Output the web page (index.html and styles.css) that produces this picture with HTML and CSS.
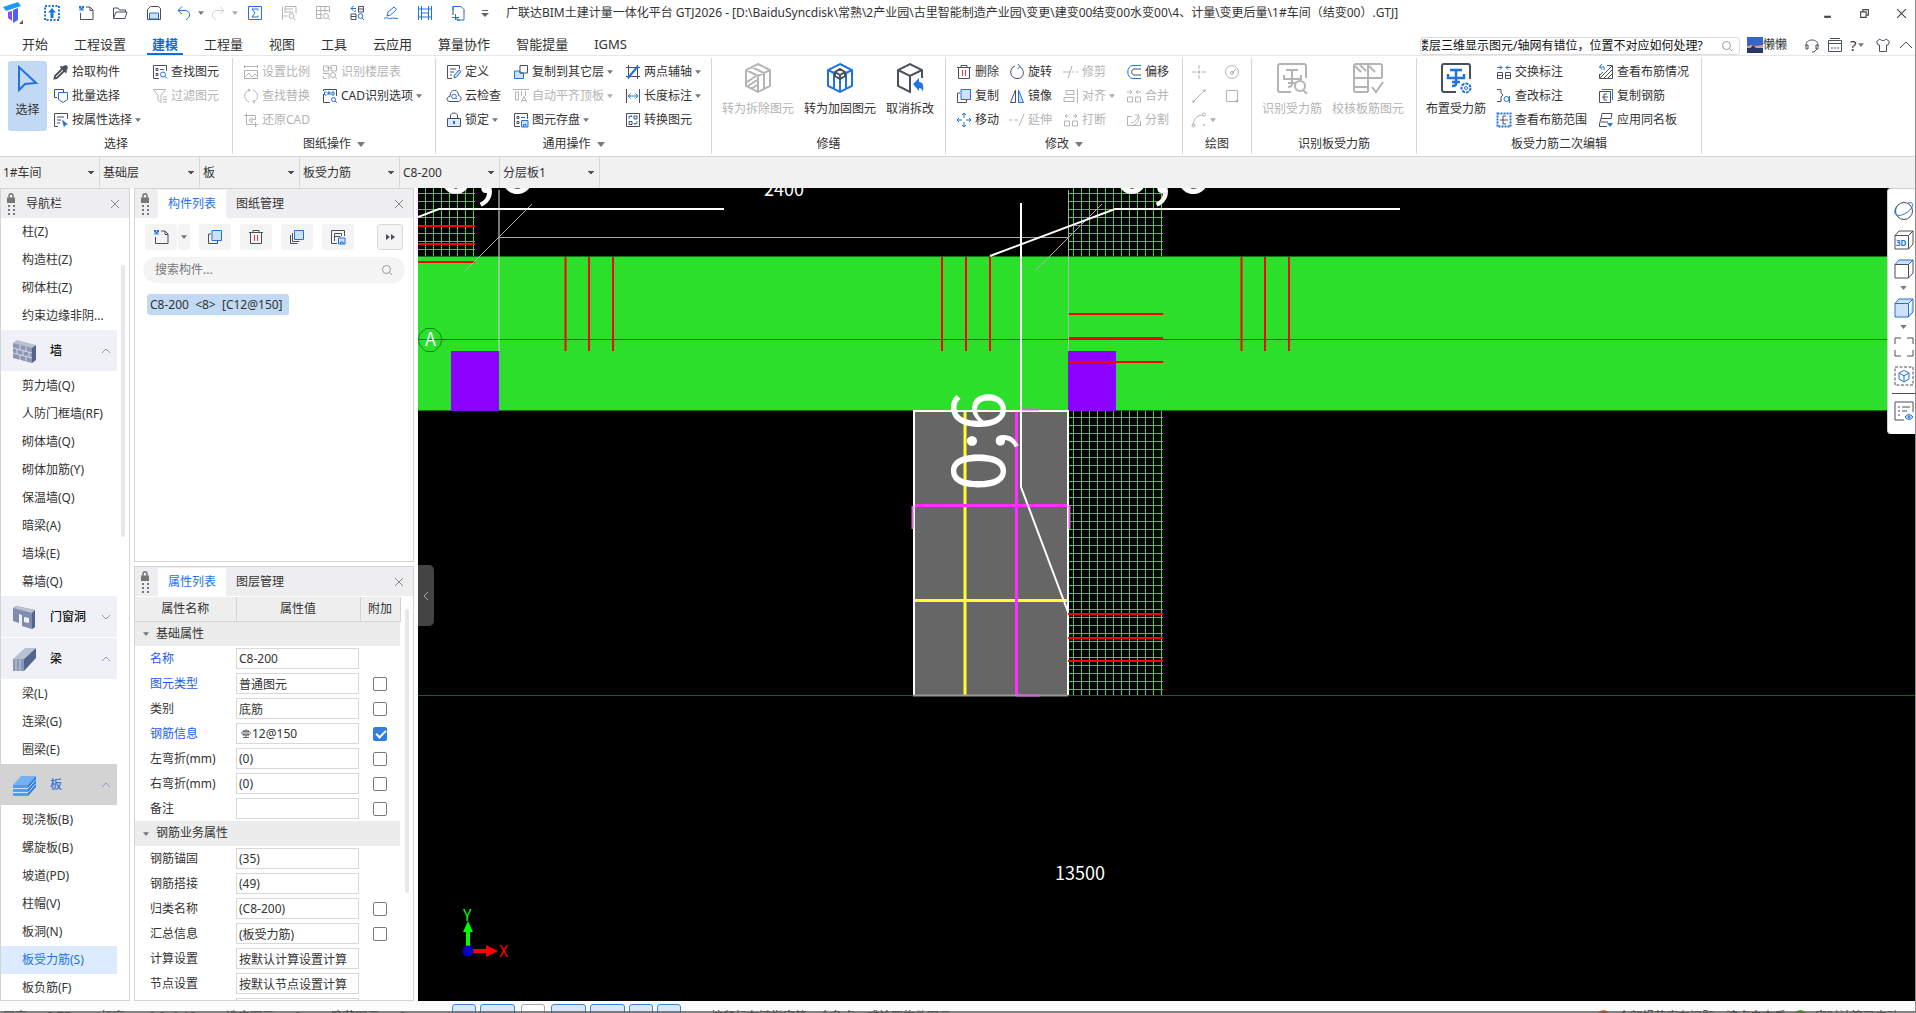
FILE: index.html
```html
<!DOCTYPE html>
<html lang="zh-CN">
<head>
<meta charset="utf-8">
<title>广联达BIM土建计量一体化平台 GTJ2026</title>
<link rel="stylesheet" href="styles.css">
</head>
<body>
<svg class="defs" aria-hidden="true">
  <symbol id="newfile" viewBox="0 0 16 16"><path d="M8 2h4l3 3v9.500h-12.500V8M12 2v3.500h3" class="d"/><path d="M1 1h5v5H1z" fill="#9cc3f5"/><path d="M1 1h2v2H1zM4 1h2v2H4zM2.500 3h2v2h-2z" fill="#1f73e0"/></symbol>
  <symbol id="open" viewBox="0 0 16 16"><path d="M1.500 13V3h4.500l1.500 2h6v2M1.500 13.500l2.500-6.500h11l-2 6.500z" class="d"/></symbol>
  <symbol id="save" viewBox="0 0 16 16"><path d="M1.500 4.500l3-3h8l2 2v11h-13z" class="d"/><path d="M3.500 14V8h9v6z" class="bf"/></symbol>
  <symbol id="undo" viewBox="0 0 16 16"><path d="M6 1.500L2 5.500l4 3.500M2 5.500h7c6 .500 6 7 1 9" class="b"/></symbol>
  <symbol id="redo" viewBox="0 0 16 16"><path d="M10 1.500l4 4-4 3.500M14 5.500H7c-6 .500-6 7-1 9" class="g"/></symbol>
  <symbol id="upload" viewBox="0 0 16 16"><path d="M1 1h14v14H1z" class="b" stroke-dasharray="2 1.500" style="stroke-width:2"/><path d="M8 3l4 4.500H9.500V13h-3V7.500H4z" fill="#1f73e0"/></symbol>
  <symbol id="sum" viewBox="0 0 16 16"><path d="M1.500 1.500h13v13h-13zM11 5.500V4H5l3 4-3 4h6v-1.500" class="b"/></symbol>
  <symbol id="calc" viewBox="0 0 16 16"><path d="M1.500 14.500v-13M4 1.500h11v7M1.500 11h5M4 4h8M4 7h8M4 2v6" class="g"/><circle cx="10.500" cy="11" r="2.500" class="g"/><path d="M12.500 13l2 2" class="g"/></symbol>
  <symbol id="gridq" viewBox="0 0 16 16"><path d="M1.500 1.500h13v6M1.500 1.500v12h6M1.500 5.500h13M1.500 9.500h6M5.800 1.500v12M10 1.500v6" class="g"/><circle cx="11" cy="11" r="2.500" class="g"/><path d="M13 13l2 2" class="g"/></symbol>
  <symbol id="swapq" viewBox="0 0 16 16"><path d="M9.500 7V1.500h5V7zM9.500 4h5M2 9v5.500h5V9zM2 11.500h5" class="d"/><path d="M4.500 1L2 3.500 4.500 6M2 3.500h5M5 7l2-1.500" class="b"/><circle cx="11.500" cy="11" r="2.300" class="b"/><path d="M13 13l2 2" class="b"/></symbol>
  <symbol id="pen" viewBox="0 0 16 16"><path d="M4 11l1-4 6-5 2.500 2.500-6 5.500zM1 13.500c3-2 5 1 7 0s4 0 7 0" class="b"/></symbol>
  <symbol id="ladder" viewBox="0 0 16 16"><path d="M1.500 1v14M14.500 1v14M4.500 1v14M11.500 1v14" class="b"/><path d="M1 4h14M1 12h14M4.500 8h7" class="b"/></symbol>
  <symbol id="addpage" viewBox="0 0 16 16"><path d="M2 10V1.500h8l3 3V8M9 15H6" class="d"/><path d="M2 5V1.500h8M13 8v7H6v-2M1 12.500h7M4.500 9v6" class="b"/></symbol>
  <symbol id="dropper" viewBox="0 0 16 16"><path d="M10 2l3-1 2 2-1 3-1.500 1.500-4-4z" fill="#4a4f5c"/><path d="M7.500 2.500l6 6M9 5l-7 7-.5 2.500L4 14l7-7" class="d" style="stroke-width:1.800"/></symbol>
  <symbol id="batch" viewBox="0 0 16 16"><path d="M4 9.500H1.500v-8h9V4" class="d"/><path d="M5.500 4.500h9v7l-4.500 3-4.500-3z" class="b"/></symbol>
  <symbol id="proplist" viewBox="0 0 16 16"><path d="M5 14.500H1.500v-13h13V7M4 5h7M4 8h4M4 11h3" class="d"/><path d="M9 7.500l6 5-2.500.500-1.500 2.500z" fill="#1f73e0"/></symbol>
  <symbol id="findel" viewBox="0 0 16 16"><path d="M7 14.500H1.500v-13h13V7M4 4.500h2v2H4zM4 9.500h2v2H4zM8 5.500h4" class="d"/><circle cx="11" cy="10.500" r="2.500" class="b"/><path d="M13 12.500l2 2" class="b"/></symbol>
  <symbol id="filter" viewBox="0 0 16 16"><path d="M1.500 1.500h12l-4.500 6v7l-3-2v-5zM11 9h4M11 11.500h4M11 14h4" class="g"/></symbol>
  <symbol id="scale" viewBox="0 0 16 16"><path d="M1.500 1v3M14.500 1v3M1 2.500h14M1.500 6.500h13v8h-13zM2 13l4-4 3 4 3-3 2 2" class="g"/></symbol>
  <symbol id="floor" viewBox="0 0 16 16"><path d="M1.500 2h5v5h-5zM9 1.500h5.500V7H9zM1 9.500h6V15M1.500 12v2.500H4M4.500 4h6" class="g"/><circle cx="11" cy="11" r="2.500" class="g"/><path d="M13 13l2 2" class="g"/></symbol>
  <symbol id="replace" viewBox="0 0 16 16"><path d="M6 14C1 12 0 5 5 2.500L7 2M5 1l2 1-1 2M10 2c5 2 6 8 2 11l-2 1M11 12l-1 2 2 1" class="g"/></symbol>
  <symbol id="cadq" viewBox="0 0 16 16"><path d="M1.500 6v8.500H8M1.500 3V1.500h13V8" class="d"/><path d="M4.500 4H2.500v3h2M6 7V4h2v3M6 5.500h2M10 4v3h2V4z" class="b"/><circle cx="11.500" cy="11.500" r="2" class="b"/><path d="M13 13l2 2" class="b"/></symbol>
  <symbol id="crop" viewBox="0 0 16 16"><path d="M3.500 1v11.500H15M1 3.500h11.500V8M12.500 10v5M6 8l3-2v5zM9 8l3-1" class="g"/></symbol>
  <symbol id="define" viewBox="0 0 16 16"><path d="M6 14.500H1.500v-13h12V5M4 5h6M4 8h4M4 11h2" class="d"/><path d="M8 14l.5-3L13 6l2 1.500-4.500 5.500z" class="bf"/></symbol>
  <symbol id="cloud" viewBox="0 0 16 16"><path d="M4 13.500c-4 0-4-5 0-5 0-8 8.500-8 8.500-1 4 1 3 6 0 6z" class="d"/><circle cx="8" cy="8.500" r="2.300" class="b"/><path d="M9.800 10l1.500 1.500" class="b"/></symbol>
  <symbol id="lock" viewBox="0 0 16 16"><path d="M4.500 6V4c0-4 7-4 7 0v2" class="d"/><path d="M1.500 6.500h13v8h-13z" class="df"/><path d="M8 9v3" class="b" style="stroke-width:2"/></symbol>
  <symbol id="copyto" viewBox="0 0 16 16"><path d="M7 7H1.500v7.500h9V9H7z" class="bf"/><path d="M7 1.500h7.500V9H7z" class="d"/></symbol>
  <symbol id="aligntop" viewBox="0 0 16 16"><path d="M0 1.500h16M2.500 4h3v8h-3zM8.500 3v5M12.500 3v5M8 14.500l3-6 3 6M9 12.500h4" class="g"/></symbol>
  <symbol id="disk" viewBox="0 0 16 16"><path d="M7 14.500H1.500v-13h13V7M4 4.500h2v2H4zM4 9.500h2v2H4zM8 5.500h4" class="d"/><path d="M8.500 8.500H15V15H8.500zM10.500 15v-2.500H13V15" class="bf"/></symbol>
  <symbol id="axis" viewBox="0 0 16 16"><path d="M3.500 1v14M12.500 1v14M1 3.500h14M1 12.500h14" class="d"/><path d="M3 14L13 2" class="b" style="stroke-width:2"/></symbol>
  <symbol id="length" viewBox="0 0 16 16"><path d="M1.500 1v14M14.500 1v14" class="d"/><path d="M3 8h10M5.500 5.500L3 8l2.500 2.500M10.500 5.500L13 8l-2.500 2.500" class="b"/></symbol>
  <symbol id="convert" viewBox="0 0 16 16"><path d="M1.500 1.500h13v13h-13zM9 4h3v3H9zM4 9.500h3v3H4z" class="d"/><path d="M4 7V4.500h3M5.500 3L7 4.500M12 9v2.500H9M10.500 13L9 11.500" class="b"/></symbol>
  <symbol id="trash" viewBox="0 0 16 16"><path d="M1 3.500h14M5 3.500v-2h6v2M2.500 3.500v11h11v-11" class="d"/><path d="M6.500 6v6M9.500 6v6" stroke="#e03a3a" fill="none"/></symbol>
  <symbol id="copy" viewBox="0 0 16 16"><path d="M4 5H1.500v9.500h9V12" class="d"/><path d="M5 1.500h9.500v10H5z" class="bf"/></symbol>
  <symbol id="move" viewBox="0 0 16 16"><path d="M8 1v5M8 10v5M1 8h5M10 8h5M6 3l2-2 2 2M6 13l2 2 2-2M3 6L1 8l2 2M13 6l2 2-2 2" class="b"/></symbol>
  <symbol id="rotate" viewBox="0 0 16 16"><path d="M6 2c-6 2-6 12 2 12.500S16 5 10.500 2.500" class="d"/><path d="M9 0l2 2.500L8.500 5" class="b"/></symbol>
  <symbol id="mirror" viewBox="0 0 16 16"><path d="M6.500 2v12.500h-5z" class="d"/><path d="M9.500 2v12.500h5z" class="bf"/></symbol>
  <symbol id="extend" viewBox="0 0 16 16"><path d="M0 8h3M5 8h4M10 14l5-12" class="g"/></symbol>
  <symbol id="trim" viewBox="0 0 16 16"><path d="M0 8h7M9 8h2M13 8h2M5 14l4-12" class="g"/></symbol>
  <symbol id="align" viewBox="0 0 16 16"><path d="M14.500 1v14M3 2.500h8v4H3zM1 9.500h10v4H1z" class="g"/></symbol>
  <symbol id="break" viewBox="0 0 16 16"><path d="M1.500 9h5v5h-5zM9.500 9h5v5h-5zM2 4h4M4 2L2 4l2 2M14 4h-4M12 2l2 2-2 2" class="g"/></symbol>
  <symbol id="offset" viewBox="0 0 16 16"><path d="M15 5H8c-3 0-3 6 0 6h7" class="d"/><path d="M15 1.500H7c-7 0-7 13 0 13h8" class="b"/></symbol>
  <symbol id="merge" viewBox="0 0 16 16"><path d="M1.500 9h5v5h-5zM9.500 9h5v5h-5zM1 4h5M4 2l2 2-2 2M15 4h-5M12 2l-2 2 2 2" class="g"/></symbol>
  <symbol id="split" viewBox="0 0 16 16"><path d="M6 4.500H1.500v9h13V9M5 11c4 0 5-3 8-8h-4M8 13c4-2 5-4 5-9" class="g"/></symbol>
  <symbol id="point" viewBox="0 0 16 16"><path d="M8 1v4M8 11v4M1 8h4M11 8h4" class="g"/><circle cx="8" cy="8" r="1.500" fill="#b4b4b4"/></symbol>
  <symbol id="circle" viewBox="0 0 16 16"><circle cx="8" cy="8" r="6.500" class="g"/><path d="M8 9l4-4" class="g"/><circle cx="8" cy="9" r="1.500" class="g"/></symbol>
  <symbol id="line" viewBox="0 0 16 16"><path d="M3 13L13 3" class="g"/><circle cx="2.500" cy="13.500" r="1.200" fill="#b4b4b4"/><circle cx="13.500" cy="2.500" r="1.200" fill="#b4b4b4"/></symbol>
  <symbol id="rect" viewBox="0 0 16 16"><path d="M2.500 2.500h11v11h-11z" class="g"/><circle cx="13" cy="13" r="1.500" fill="#b4b4b4"/></symbol>
  <symbol id="arc" viewBox="0 0 16 16"><path d="M2 14C2 7 6 3 12 3" class="g"/><circle cx="2.500" cy="13.500" r="1.500" class="g"/><circle cx="13" cy="2.500" r="1.500" class="g"/><circle cx="13" cy="13" r="1" fill="#b4b4b4"/></symbol>
  <symbol id="swapmark" viewBox="0 0 16 16"><path d="M1 3.500h5M4 1.500l2 2-2 2M15 3.500h-5M12 1.500l-2 2 2 2" class="b"/><path d="M1.500 8.500h5v6h-5zM9.500 8.500h5v6h-5zM1.500 11.500h5M9.500 11.500h5" class="d"/></symbol>
  <symbol id="markq" viewBox="0 0 16 16"><path d="M1 1.500h4V5l2 2-2 2v4.500H1" class="d"/><circle cx="10.500" cy="11" r="2.500" class="b"/><path d="M13.500 8v7" class="b"/></symbol>
  <symbol id="range" viewBox="0 0 16 16"><path d="M1.500 1.500h13v13h-13z" class="b" stroke-dasharray="2 1" style="stroke-width:2"/><path d="M10 4H7v8h3M4 8h8" class="d"/></symbol>
  <symbol id="hatchq" viewBox="0 0 16 16"><path d="M9 1.500h5.500v13h-13V10M2 14L14 2M6 14l8-8M10 14l4-4M2 11l3-3" class="d"/><path d="M4 0L1.500 3 4 5.500M1.500 3H6v3" class="b"/></symbol>
  <symbol id="copybar" viewBox="0 0 16 16"><path d="M1.500 3.500h11v11h-11zM9 6H6v6h3M4 9h6" class="d"/><path d="M4 1.500h10.500V12" class="b"/></symbol>
  <symbol id="applyname" viewBox="0 0 16 16"><path d="M4 1.500h10l-1 5H3zM3 6.500L1.500 12v2.500H9M3 10h7" class="d"/><path d="M9 11h6l-3 4z" fill="#1f73e0"/></symbol>
  <symbol id="mag" viewBox="0 0 16 16"><circle cx="7.500" cy="7.500" r="4" fill="none" stroke="#999"/><path d="M10.500 10.500L13 13" stroke="#999"/></symbol>
  <symbol id="headset" viewBox="0 0 16 16"><path d="M2 9C1 1 15 1 14 9M2 8v4h2V8zM14 8v4h-2V8zM13 12l-3 3H8" class="d"/></symbol>
  <symbol id="cal" viewBox="0 0 16 16"><path d="M1.500 3.500h13v11h-13zM3 1.500h10M1.500 6.500h13M4 11h2M7 11h2M10 11h2" class="d"/></symbol>
  <symbol id="shirt" viewBox="0 0 16 16"><path d="M5 2L1.500 4.500 3 8h1.500v6.500h7V8H13l1.500-3.500L11 2c-1 2-5 2-6 0z" class="d"/></symbol>
  <symbol id="arrow" viewBox="0 0 8 5"><path d="M0 0h8L4 5z" fill="#77797e"/></symbol>
  <symbol id="up" viewBox="0 0 10 6"><path d="M1 5l4-4 4 4" fill="none" stroke="#8c9ab5"/></symbol>
  <symbol id="down" viewBox="0 0 10 6"><path d="M1 1l4 4 4-4" fill="none" stroke="#8c9ab5"/></symbol>
  <symbol id="x" viewBox="0 0 10 10"><path d="M1 1l8 8M9 1L1 9" fill="none" stroke="#888"/></symbol>
  <symbol id="grip" viewBox="0 0 10 22"><path d="M3 5V3c0-3 4-3 4 0v2" fill="none" stroke="#777" stroke-width="1.500"/><path d="M1 4.500h8V10H1z" fill="#777"/><path d="M3 12v10M8 12v10" stroke="#777" stroke-width="2" stroke-dasharray="2 2"/></symbol>
  <symbol id="cube" viewBox="0 0 20 20"><path d="M1 5.500h13.500V19H1zM1 5.500L5 1h14l-4.500 4.500M19 1v13l-4.500 5"/></symbol>
</svg>

<div class="app">
  <header class="titlebar">
    <svg class="logo" viewBox="0 0 22 22"><path d="M1 5L16 0l3 4L4 9z" fill="#1b9bff"/><path d="M6 10l4-1v10l-4-3z" fill="#8a4cf0"/><path d="M11 8l5-2v12l-5 3z" fill="#4766f6"/><path d="M21 18v4h-4z" fill="#555"/></svg>
    <nav class="quick" aria-label="快速访问">
      <button aria-label="上传"><svg><use href="#upload"/></svg></button>
      <button aria-label="新建"><svg><use href="#newfile"/></svg></button>
      <button aria-label="打开"><svg><use href="#open"/></svg></button>
      <button aria-label="保存"><svg><use href="#save"/></svg></button>
      <button aria-label="撤销" class="drop"><svg><use href="#undo"/></svg><svg class="arrow"><use href="#arrow"/></svg></button>
      <button aria-label="恢复" class="drop dim"><svg><use href="#redo"/></svg><svg class="arrow"><use href="#arrow"/></svg></button>
      <button aria-label="汇总计算"><svg><use href="#sum"/></svg></button>
      <button aria-label="查看计算式"><svg><use href="#calc"/></svg></button>
      <button aria-label="查看工程量"><svg><use href="#gridq"/></svg></button>
      <button aria-label="查找替换"><svg><use href="#swapq"/></svg></button>
      <button aria-label="编辑"><svg><use href="#pen"/></svg></button>
      <button aria-label="钢筋三维"><svg><use href="#ladder"/></svg></button>
      <button aria-label="添加"><svg><use href="#addpage"/></svg></button>
      <button aria-label="自定义" class="more"><svg viewBox="0 0 8 9"><path d="M1 1.500h6" stroke="#666"/><path d="M0 4h8L4 8z" fill="#666"/></svg></button>
    </nav>
    <h1>广联达BIM土建计量一体化平台 GTJ2026 - [D:\BaiduSyncdisk\常熟\2产业园\古里智能制造产业园\变更\建变00结变00水变00\4、计量\变更后量\1#车间（结变00）.GTJ]</h1>
    <div class="winbtns">
      <button aria-label="最小化"><svg viewBox="0 0 10 10"><path d="M2 8h6" stroke="#444" stroke-width="2"/></svg></button>
      <button aria-label="还原"><svg viewBox="0 0 10 10"><path d="M1.500 3.500h5v5h-5zM3.500 3V1.500h5v5H7" fill="none" stroke="#444"/></svg></button>
      <button aria-label="关闭"><svg viewBox="0 0 10 10"><path d="M1 1l8 8M9 1L1 9" stroke="#444"/></svg></button>
    </div>
  </header>

  <div class="tabbar">
    <nav class="tabs">
      <a href="#">开始</a><a href="#">工程设置</a><a href="#" class="on">建模</a><a href="#">工程量</a><a href="#">视图</a><a href="#">工具</a><a href="#">云应用</a><a href="#">算量协作</a><a href="#">智能提量</a><a href="#">IGMS</a>
    </nav>
    <label class="help"><input type="text" aria-label="帮助搜索" value="楼层三维显示图元/轴网有错位，位置不对应如何处理?"><svg><use href="#mag"/></svg></label>
    <div class="user"><svg viewBox="0 0 16 16"><path d="M0 0h16v16H0z" fill="#3267c8"/><path d="M0 9l5-1 3 1 8-1v3H0z" fill="#e09a92"/><path d="M0 11h16v5H0z" fill="#26376e"/><path d="M3 12l3-4 4 4z" fill="#3a3050"/></svg><span>懒懒</span></div>
    <div class="utils">
      <button aria-label="客服"><svg><use href="#headset"/></svg></button>
      <button aria-label="日历"><svg><use href="#cal"/></svg></button>
      <button aria-label="帮助" class="q">?<svg class="arrow"><use href="#arrow"/></svg></button>
      <button aria-label="皮肤"><svg><use href="#shirt"/></svg></button>
      <button aria-label="收起"><svg viewBox="0 0 16 16"><path d="M2 11l6-6 6 6" class="d"/></svg></button>
    </div>
  </div>

  <div class="ribbon">
    <section class="group g1">
      <div class="body">
        <button class="big picked"><svg viewBox="0 0 28 32"><path d="M5 4v23l6-6 11-1z" fill="none" stroke="#1f73e0" stroke-width="2"/></svg>选择</button>
        <div class="tools">
          <button><svg><use href="#dropper"/></svg>拾取构件</button>
          <button><svg><use href="#batch"/></svg>批量选择</button>
          <button><svg><use href="#proplist"/></svg>按属性选择<svg class="arrow"><use href="#arrow"/></svg></button>
          <button><svg><use href="#findel"/></svg>查找图元</button>
          <button disabled><svg><use href="#filter"/></svg>过滤图元</button>
        </div>
      </div>
      <h2>选择</h2>
    </section>
    <section class="group g2">
      <div class="body"><div class="tools">
        <button disabled><svg><use href="#scale"/></svg>设置比例</button>
        <button disabled><svg><use href="#replace"/></svg>查找替换</button>
        <button disabled><svg><use href="#crop"/></svg>还原CAD</button>
        <button disabled><svg><use href="#floor"/></svg>识别楼层表</button>
        <button><svg><use href="#cadq"/></svg>CAD识别选项<svg class="arrow"><use href="#arrow"/></svg></button>
      </div></div>
      <h2>图纸操作<svg class="arrow"><use href="#arrow"/></svg></h2>
    </section>
    <section class="group g3">
      <div class="body"><div class="tools">
        <button><svg><use href="#define"/></svg>定义</button>
        <button><svg><use href="#cloud"/></svg>云检查</button>
        <button><svg><use href="#lock"/></svg>锁定<svg class="arrow"><use href="#arrow"/></svg></button>
        <button><svg><use href="#copyto"/></svg>复制到其它层<svg class="arrow"><use href="#arrow"/></svg></button>
        <button disabled><svg><use href="#aligntop"/></svg>自动平齐顶板<svg class="arrow"><use href="#arrow"/></svg></button>
        <button><svg><use href="#disk"/></svg>图元存盘<svg class="arrow"><use href="#arrow"/></svg></button>
        <button><svg><use href="#axis"/></svg>两点辅轴<svg class="arrow"><use href="#arrow"/></svg></button>
        <button><svg><use href="#length"/></svg>长度标注<svg class="arrow"><use href="#arrow"/></svg></button>
        <button><svg><use href="#convert"/></svg>转换图元</button>
      </div></div>
      <h2>通用操作<svg class="arrow"><use href="#arrow"/></svg></h2>
    </section>
    <section class="group g4">
      <div class="body">
        <button class="big" disabled><svg viewBox="0 0 28 32"><path d="M14 2l12 6v16l-12 6-12-6V8zM2 8l12 6 12-6M14 14v16M8 5l12 6M3 20l9-6M4 24l9-6M7 27l6-4M20 11v16" fill="none" stroke="#b4b4b4" stroke-width="2"/></svg>转为拆除图元</button>
        <button class="big"><svg viewBox="0 0 28 32"><path d="M14 2l12 6v16l-12 6-12-6V8zM2 8l6 3M26 8l-6 3M8 11v15M20 11v15M14 16v14" fill="none" stroke="#1f73e0" stroke-width="2"/><path d="M14 7l5 3v4l-5 3-5-3v-4zM9 10l5 3 5-3M14 13v4" fill="none" stroke="#4a4f5c" stroke-width="2"/></svg>转为加固图元</button>
        <button class="big"><svg viewBox="0 0 28 32"><path d="M26 16V8L14 2 2 8v16l12 6V14M2 8l12 6 12-6" fill="none" stroke="#4a4f5c" stroke-width="2"/><path d="M17 22l6-6v4c4 0 5 4 4 10-1-3-2-4-4-4v3z" fill="#1f73e0"/></svg>取消拆改</button>
      </div>
      <h2>修缮</h2>
    </section>
    <section class="group g5">
      <div class="body"><div class="tools">
        <button><svg><use href="#trash"/></svg>删除</button>
        <button><svg><use href="#copy"/></svg>复制</button>
        <button><svg><use href="#move"/></svg>移动</button>
        <button><svg><use href="#rotate"/></svg>旋转</button>
        <button><svg><use href="#mirror"/></svg>镜像</button>
        <button disabled><svg><use href="#extend"/></svg>延伸</button>
        <button disabled><svg><use href="#trim"/></svg>修剪</button>
        <button disabled><svg><use href="#align"/></svg>对齐<svg class="arrow"><use href="#arrow"/></svg></button>
        <button disabled><svg><use href="#break"/></svg>打断</button>
        <button><svg><use href="#offset"/></svg>偏移</button>
        <button disabled><svg><use href="#merge"/></svg>合并</button>
        <button disabled><svg><use href="#split"/></svg>分割</button>
      </div></div>
      <h2>修改<svg class="arrow"><use href="#arrow"/></svg></h2>
    </section>
    <section class="group g6">
      <div class="body"><div class="tools">
        <button disabled aria-label="点"><svg><use href="#point"/></svg></button>
        <button disabled aria-label="直线"><svg><use href="#line"/></svg></button>
        <button disabled aria-label="弧"><svg><use href="#arc"/></svg><svg class="arrow"><use href="#arrow"/></svg></button>
        <button disabled aria-label="圆"><svg><use href="#circle"/></svg></button>
        <button disabled aria-label="矩形"><svg><use href="#rect"/></svg></button>
      </div></div>
      <h2>绘图</h2>
    </section>
    <section class="group g7">
      <div class="body">
        <button class="big" disabled><svg viewBox="0 0 32 32"><path d="M15 30H4q-2 0-2-2V4q0-2 2-2h24q2 0 2 2v12M10 8h12M8 13v4h17v-4M16 8v14q0 3-4 3M12 21h8" fill="none" stroke="#b4b4b4" stroke-width="2"/><circle cx="24" cy="24" r="5" fill="#fff" stroke="#b4b4b4" stroke-width="2"/><path d="M27 28l4 4" stroke="#b4b4b4" stroke-width="2"/></svg>识别受力筋</button>
        <button class="big" disabled><svg viewBox="0 0 32 32"><path d="M16 30H4q-2 0-2-2V4q0-2 2-2h24q2 0 2 2v12M16 2v28M2 16h28M3 4l6 6M8 3l6 6M17 4l6 6M2 25h14" fill="none" stroke="#b4b4b4" stroke-width="2"/><path d="M20 25l4 5 7-10" fill="none" stroke="#b4b4b4" stroke-width="2"/></svg>校核板筋图元</button>
      </div>
      <h2>识别板受力筋</h2>
    </section>
    <section class="group g8">
      <div class="body">
        <button class="big"><svg viewBox="0 0 32 32"><path d="M16 30H4q-2 0-2-2V4q0-2 2-2h24q2 0 2 2v13" fill="none" stroke="#4a4f5c" stroke-width="2"/><path d="M10 8h12M8 12v4h16v-4M16 8v14q0 2-4 2M12 20h8" fill="none" stroke="#1f73e0" stroke-width="2.500"/><circle cx="26" cy="26" r="4.500" fill="#fff" stroke="#1f73e0" stroke-width="2" stroke-dasharray="3 1"/><circle cx="26" cy="26" r="1.500" fill="none" stroke="#1f73e0"/></svg>布置受力筋</button>
        <div class="tools">
          <button><svg><use href="#swapmark"/></svg>交换标注</button>
          <button><svg><use href="#markq"/></svg>查改标注</button>
          <button><svg><use href="#range"/></svg>查看布筋范围</button>
          <button><svg><use href="#hatchq"/></svg>查看布筋情况</button>
          <button><svg><use href="#copybar"/></svg>复制钢筋</button>
          <button><svg><use href="#applyname"/></svg>应用同名板</button>
        </div>
      </div>
      <h2>板受力筋二次编辑</h2>
    </section>
  </div>

  <div class="combos">
    <select aria-label="单体"><option>1#车间</option></select>
    <select aria-label="楼层"><option>基础层</option></select>
    <select aria-label="构件大类"><option>板</option></select>
    <select aria-label="构件类型"><option>板受力筋</option></select>
    <select aria-label="构件"><option>C8-200</option></select>
    <select aria-label="分层"><option>分层板1</option></select>
  </div>

  <main class="work">
    <aside class="panel navpanel">
      <div class="phead"><svg class="grip"><use href="#grip"/></svg><span>导航栏</span><button class="close" aria-label="关闭导航栏"><svg><use href="#x"/></svg></button></div>
      <div class="navbody">
        <nav class="navlist">
          <a href="#">柱(Z)</a><a href="#">构造柱(Z)</a><a href="#">砌体柱(Z)</a><a href="#">约束边缘非阴...</a>
          <button><svg class="cat" viewBox="0 0 24 24"><path d="M1 4l4-3 19 5-4 4z" fill="#b9c0d2"/><path d="M1 4l19 5v15L1 19z" fill="#8b97b5"/><path d="M20 9l4-3v15l-4 3z" fill="#55648c"/><path d="M1 9l19 5M1 14l19 5M8 6v5M14 8v5M5 10v5M11 12v5M17 13v5M8 16v5M14 17v5" stroke="#d4d9e6" fill="none"/></svg><b>墙</b><svg class="chev"><use href="#up"/></svg></button>
          <a href="#">剪力墙(Q)</a><a href="#">人防门框墙(RF)</a><a href="#">砌体墙(Q)</a><a href="#">砌体加筋(Y)</a><a href="#">保温墙(Q)</a><a href="#">暗梁(A)</a><a href="#">墙垛(E)</a><a href="#">幕墙(Q)</a>
          <button><svg class="cat" viewBox="0 0 24 24"><path d="M1 3l3-2 19 4v17l-3 2-10-3V10l-3-1v9l-6-2z" fill="#7f8cad"/><path d="M1 3l3-2 19 4-3 3z" fill="#b9c0d2"/><path d="M20 8l3-3v17l-3 2z" fill="#55648c"/><path d="M12 12l5 1v5l-5-1z" fill="#f2f3f8"/></svg><b>门窗洞</b><svg class="chev"><use href="#down"/></svg></button>
          <button><svg class="cat" viewBox="0 0 24 24"><path d="M1 12L13 1h11L12 12z" fill="#b9c0d2"/><path d="M1 12h11v12H1z" fill="#8b97b5"/><path d="M12 12L24 1v10L12 24z" fill="#55648c"/><path d="M4 12v12M8 12v12" stroke="#c8cede"/></svg><b>梁</b><svg class="chev"><use href="#up"/></svg></button>
          <a href="#">梁(L)</a><a href="#">连梁(G)</a><a href="#">圈梁(E)</a>
          <button class="on"><svg class="cat" viewBox="0 0 24 24"><path d="M1 12L9 3h15l-8 9z" fill="#74b2f4"/><path d="M1 12h15v11H1z" fill="#4f9df2"/><path d="M16 12l8-9v11l-8 9z" fill="#2b7be8"/><path d="M1 15.500h15l8-9M1 19.500h15l8-9" stroke="#cfe4fb" fill="none"/></svg><b>板</b><svg class="chev"><use href="#up"/></svg></button>
          <a href="#">现浇板(B)</a><a href="#">螺旋板(B)</a><a href="#">坡道(PD)</a><a href="#">柱帽(V)</a><a href="#">板洞(N)</a><a href="#" class="on">板受力筋(S)</a><a href="#">板负筋(F)</a>
        </nav>
        <div class="thumb"></div>
      </div>
    </aside>

    <div class="side">
      <section class="panel complist">
        <div class="phead"><svg class="grip"><use href="#grip"/></svg><button class="ptab on">构件列表</button><button class="ptab">图纸管理</button><button class="close" aria-label="关闭构件列表"><svg><use href="#x"/></svg></button></div>
        <div class="ctools">
          <button class="new" aria-label="新建构件"><svg><use href="#newfile"/></svg></button><button class="newdrop" aria-label="新建选项"><svg class="arrow"><use href="#arrow"/></svg></button>
          <button aria-label="复制构件"><svg><use href="#copy"/></svg></button>
          <button aria-label="删除构件"><svg><use href="#trash"/></svg></button>
          <button aria-label="层间复制"><svg viewBox="0 0 16 16"><path d="M1.500 6v8.500h7M3.500 4v8.500h7" class="d"/><path d="M5.500 1.500h9v9h-9z" class="bf"/></svg></button>
          <button aria-label="存盘"><svg viewBox="0 0 16 16"><path d="M7 14.500H1.500v-13h13V7M4.500 4.500h7M4.500 12V4.500M11.500 4.500V7M4.500 7.500h6" class="d"/><path d="M8.500 9H15v6H8.500zM10.500 15v-2H13v2" class="bf"/></svg></button>
          <button class="last" aria-label="更多"><svg viewBox="0 0 16 16"><path d="M4 5l4 3-4 3zM9 5l4 3-4 3z" fill="#4a4f5c"/></svg></button>
        </div>
        <label class="search"><input type="text" aria-label="搜索构件" placeholder="搜索构件..."><svg><use href="#mag"/></svg></label>
        <button class="comp">C8-200 &nbsp;&lt;8&gt; &nbsp;[C12@150]</button>
      </section>
      <section class="panel props">
        <div class="phead"><svg class="grip"><use href="#grip"/></svg><button class="ptab on">属性列表</button><button class="ptab">图层管理</button><button class="close" aria-label="关闭属性列表"><svg><use href="#x"/></svg></button></div>
        <div class="pbody">
          <table>
            <colgroup><col class="c1"><col class="c2"><col class="c3"></colgroup>
            <thead><tr><th>属性名称</th><th>属性值</th><th>附加</th></tr></thead>
            <tbody>
              <tr class="sec"><td colspan="3"><svg class="arrow"><use href="#arrow"/></svg>基础属性</td></tr>
              <tr class="key"><td><label for="p1">名称</label></td><td><input id="p1" type="text" value="C8-200"></td><td></td></tr>
              <tr class="key"><td><label for="p2">图元类型</label></td><td><input id="p2" type="text" value="普通图元"></td><td><input type="checkbox" aria-label="附加图元类型"></td></tr>
              <tr><td><label for="p3">类别</label></td><td><input id="p3" type="text" value="底筋"></td><td><input type="checkbox" aria-label="附加类别"></td></tr>
              <tr class="key"><td><label for="p4">钢筋信息</label></td><td><span class="rebar"><svg viewBox="0 0 10 10"><path d="M5 0v9M3 1v6M7 1v6M2 8.500h6" stroke="#444" fill="none" stroke-width=".8"/><ellipse cx="5" cy="4" rx="4.500" ry="2" fill="none" stroke="#444" stroke-width=".8"/></svg><input id="p4" type="text" value="12@150"></span></td><td><input type="checkbox" checked aria-label="附加钢筋信息"></td></tr>
              <tr><td><label for="p5">左弯折(mm)</label></td><td><input id="p5" type="text" value="(0)"></td><td><input type="checkbox" aria-label="附加左弯折"></td></tr>
              <tr><td><label for="p6">右弯折(mm)</label></td><td><input id="p6" type="text" value="(0)"></td><td><input type="checkbox" aria-label="附加右弯折"></td></tr>
              <tr><td><label for="p7">备注</label></td><td><input id="p7" type="text"></td><td><input type="checkbox" aria-label="附加备注"></td></tr>
              <tr class="sec"><td colspan="3"><svg class="arrow"><use href="#arrow"/></svg>钢筋业务属性</td></tr>
              <tr><td><label for="p8">钢筋锚固</label></td><td><input id="p8" type="text" value="(35)"></td><td></td></tr>
              <tr><td><label for="p9">钢筋搭接</label></td><td><input id="p9" type="text" value="(49)"></td><td></td></tr>
              <tr><td><label for="p10">归类名称</label></td><td><input id="p10" type="text" value="(C8-200)"></td><td><input type="checkbox" aria-label="附加归类名称"></td></tr>
              <tr><td><label for="p11">汇总信息</label></td><td><input id="p11" type="text" value="(板受力筋)"></td><td><input type="checkbox" aria-label="附加汇总信息"></td></tr>
              <tr><td><label for="p12">计算设置</label></td><td><input id="p12" type="text" value="按默认计算设置计算"></td><td></td></tr>
              <tr><td><label for="p13">节点设置</label></td><td><input id="p13" type="text" value="按默认节点设置计算"></td><td></td></tr>
              <tr><td></td><td><input type="text" aria-label="搭接设置"></td><td></td></tr>
            </tbody>
          </table>
          <div class="thumb"></div>
        </div>
      </section>
    </div>

    <section class="view">
      <svg class="drawing">
        <g transform="translate(-418 -188)">
          <g stroke="#2bdf2b" stroke-dasharray="1 7">
            <path d="M425 222.500h50M1073 222.500h90" stroke-width="69"/>
            <path d="M446.500 193v64" stroke-width="57"/>
            <path d="M1115.500 193v64M1115.500 417v278" stroke-width="95"/>
            <path d="M1073 553h90" stroke-width="284"/>
          </g>
          <path d="M400 257h4000v154H400z" fill="#2bdf2b"/>
          <path d="M400 256.500h4000M400 410.500h4000" stroke="#14701a"/>
          <path d="M418 339.500h4000" stroke="#a02a10"/>
          <path d="M418 695.500h4000" stroke="#0a6a0a"/>
          <path d="M426 328.500h8l6 5 2 6-2 6-6 6h-8l-6-6-2-6 2-6z" fill="none" stroke="#0a8a14"/>
          <path d="M451 351h48v60h-48zM1068 351h48v60h-48z" fill="#8c00ff"/>
          <path d="M914 411h154v284H914z" fill="#666"/>
          <path d="M965 411v284M914 600.500h154" stroke="#ffff30" stroke-width="3"/>
          <path d="M1016.500 411v284M914 505.500h154" stroke="#ff30ff" stroke-width="3"/>
          <path d="M914 695V411h154v284" fill="none" stroke="#fff" stroke-width="2"/>
          <path d="M913 695.500h155" stroke="#9a9a9a" stroke-width="2"/>
          <path d="M912.500 506v23M1069.500 506v23M1021 409.500h18M1016 695.500h24" stroke="#d860d8" stroke-width="2"/>
          <path d="M418 226h57M418 244h57M418 262h57M1068 314h95M1068 338h95M1068 362h95M1068 614h95M1068 638h95M1068 661h95M565.500 257v94M589 257v94M613 257v94M942 257v94M966 257v94M990 257v94M1241.500 257v94M1265 257v94M1289 257v94" stroke="#f00" stroke-width="2"/>
          <path d="M499 190v161" stroke="#c8c8c8" stroke-width="2" opacity=".6"/>
          <path d="M499 237.500h569M1068.500 190v161M465 271l67-67M1035 271l67-67" stroke="#b4b4b4" opacity=".95"/>
          <path d="M418 217l21-8h285M990 256l125-47h285M1021 203v284l47 125" fill="none" stroke="#fff" stroke-width="2"/>
          <g class="cad">
            <text x="436" y="193" class="huge">0;6</text>
            <text x="1112" y="193" class="huge">0;6</text>
            <text class="huge" transform="translate(1005 491) rotate(-90)">0;6</text>
            <text x="764" y="196">2400</text>
            <text x="1055" y="880">13500</text>
            <text x="425" y="346">A</text>
            <text x="463" y="921" class="ax ay">Y</text>
            <text x="499" y="957" class="ax">X</text>
          </g>
          <path d="M466 950v-18h-3l5-11 5 11h-3v18z" fill="#0f0"/>
          <path d="M472 949h14v-4l12 6-12 6v-4h-14z" fill="#f00"/>
          <circle cx="468" cy="951" r="5.500" fill="#0000c8"/>
        </g>
      </svg>
      <button class="handle" aria-label="收起面板"><svg viewBox="0 0 8 10"><path d="M6 1L2 5l4 4" stroke="#aaa" fill="none"/></svg></button>
      <div class="viewtools">
        <button aria-label="动态观察"><svg viewBox="0 0 20 20"><circle cx="10" cy="10" r="8.500" class="d"/><path d="M3 5c-6 9 1 12 9 7s9-12 2-10M1 13" class="b"/></svg></button>
        <button aria-label="三维"><svg viewBox="0 0 20 20"><use href="#cube" class="d"/><text x="2" y="16" class="t3d">3D</text></svg></button>
        <button aria-label="俯视"><svg viewBox="0 0 20 20"><path d="M1 5.500L5 1h14l-4.500 4.500z" class="bf"/><path d="M1 5.500h13.500V19H1zM19 1v13l-4.500 5" class="d"/></svg><svg class="arrow"><use href="#arrow"/></svg></button>
        <button aria-label="实体"><svg viewBox="0 0 20 20"><use href="#cube" class="bf"/></svg><svg class="arrow"><use href="#arrow"/></svg></button>
        <button aria-label="全屏"><svg viewBox="0 0 20 20"><path d="M1 7V1h6M13 1h6v6M19 13v6h-6M7 19H1v-6" class="d"/></svg></button>
        <button aria-label="局部三维"><svg viewBox="0 0 20 20"><path d="M1 1h18v18H1z" class="d" stroke-dasharray="3 1.500"/><path d="M10 4.500l5 2.500v6l-5 3-5-3V7zM5 7l5 3 5-3M10 10v6" class="b"/></svg></button>
        <hr>
        <button aria-label="显示设置"><svg viewBox="0 0 20 20"><path d="M10 19H1V1h18v10M4 6h2M8 6h8M4 10h2M8 10h5M4 14h2" class="d"/><path d="M11 16q4-5 8 0-4 5-8 0z" class="bf"/><circle cx="15" cy="16" r="1" class="b"/></svg></button>
      </div>
    </section>
  </main>

  <footer class="status">
    <span>层高：</span><span>3.75</span><span class="s1">标高：</span><span>-0.9~0.12</span><span class="s1">选中图元：</span><span>0</span><span class="s1">隐藏图元：</span><span>0</span>
    <div class="sbtns">
      <button aria-label="正交"></button><button class="wide" aria-label="捕捉"></button><button class="plain" aria-label="交点"></button><button class="wide" aria-label="垂点"></button><button class="wide" aria-label="中点"></button><button aria-label="顶点"></button><button aria-label="坐标"></button>
    </div>
    <span class="tip">按鼠标左键指定第一个角点，或拾取构件图元</span>
    <i class="dot orange"></i><span>全部规范库有问题，请点击查看</span>
    <i class="dot green"></i><span>实时计算已启动</span>
  </footer>
</div>
</body>
</html>
```
FILE: styles.css
```css
* { box-sizing: border-box; }
html, body { height: 100%; }
body {
  margin: 0;
  background: #fff;
  color: #333;
  font: 12px/16px "Noto Sans", "Noto Sans CJK SC", sans-serif;
  overflow: hidden;
}
button, input, select { font: inherit; color: inherit; margin: 0; }
button { border: 0; background: none; padding: 0; display: flex; align-items: center; white-space: nowrap; }
a { color: inherit; text-decoration: none; }
h1, h2 { margin: 0; font-size: 12px; font-weight: 400; }
svg { width: 16px; height: 16px; flex: none; display: block; }
.defs { position: absolute; width: 0; height: 0; }
.d { fill: none; stroke: #4a4f5c; }
.df { fill: #dce9fa; stroke: #4a4f5c; }
.b { fill: none; stroke: #1f73e0; }
.bf { fill: #cfe1f8; stroke: #1f73e0; }
.g { fill: none; stroke: #b4b4b4; }
svg.arrow { width: 6px; height: 4px; }

.app { height: 100vh; display: flex; flex-direction: column; border-right: 1px solid #8c8c8c; }

.titlebar { flex: none; height: 28px; display: flex; align-items: center; padding: 0 8px 2px 2px; }
.logo { width: 22px; height: 22px; margin-right: 20px; }
.quick { flex: none; display: flex; align-items: center; gap: 18px; width: 462px; }
.quick .drop { gap: 6px; margin-left: -4px; }
.quick .drop + .drop { margin: 0 -9px 0 -12px; }
.quick .dim { opacity: .6; }
.quick .more { margin-left: -4px; }
.quick .more svg { width: 8px; height: 9px; }
.titlebar h1 { flex: 1; white-space: nowrap; }
.winbtns { display: flex; gap: 26px; }
.winbtns svg { width: 11px; height: 11px; }

.tabbar { flex: none; height: 28px; display: flex; align-items: center; border-bottom: 1px solid #e6e6e6; }
.tabs { flex: 1; align-self: stretch; display: flex; gap: 16px; padding-left: 17px; }
.tabs a { padding: 8px 5px 0; font-size: 13px; border-bottom: 2px solid transparent; }
.tabs .on { color: #0f6be0; font-weight: 700; border-color: #0f6be0; }
.help { width: 320px; height: 18px; margin-top: 8px; display: flex; align-items: center; border: 1px solid #ddd; border-radius: 3px; padding-right: 4px; }
.help input { flex: 1; min-width: 0; border: 0; background: none; padding: 0 0 0 1px; text-indent: -5px; color: #111; height: 16px; outline: 0; }
.user { display: flex; align-items: center; padding: 6px 17px 0 7px; }
.utils { display: flex; align-items: center; gap: 7px; padding-top: 6px; margin-right: 1px; }
.utils .q { width: 18px; font-size: 15px; gap: 1px; }

.ribbon { flex: none; height: 101px; display: flex; padding-top: 2px; border-bottom: 1px solid #d6d6d6; }
.group { flex: none; height: 96px; display: flex; flex-direction: column; border-right: 1px solid #d6d6d6; }
.group .body { height: 76px; display: flex; gap: 10px; padding: 2px 0 0 10px; }
.group h2 { display: flex; justify-content: center; align-items: center; gap: 6px; height: 20px; }
.group h2 .arrow { width: 8px; height: 5px; }
.tools { display: grid; grid-auto-flow: column; grid-template-rows: repeat(3, 24px); }
.tools button { gap: 3px; }
.tools button:disabled, .big:disabled { color: #b4b4b4; }
button:disabled .arrow { opacity: .6; }
.big { flex-direction: column; align-self: flex-start; gap: 7px; height: 70px; padding-top: 2px; }
.big svg { width: 32px; height: 32px; }
.group .picked { width: 40px; margin-top: 1px; background: #c1d9f2; border-radius: 3px; }
.g1 { width: 233px; }
.g1 .body { padding-left: 8px; gap: 6px; }
.g1 .tools { grid-template-columns: 99px 80px; }
.g2 { width: 203px; }
.g2 .tools { grid-template-columns: 79px 110px; }
.g3 { width: 276px; }
.g3 .tools { grid-template-columns: 67px 112px 86px; }
.g4 { width: 234px; }
.g5 { width: 237px; }
.g5 .tools { grid-template-columns: 53px 54px 63px 50px; }
.g6 { width: 69px; }
.g6 .body { padding-left: 8px; }
.g6 .tools { grid-template-columns: 33px 24px; }
.g7 { width: 165px; }
.g8 { width: 285px; }
.g8 .body { padding-left: 9px; }
.g8 .tools { grid-template-columns: 102px 100px; }

.combos { flex: none; height: 31px; display: flex; background: #f1f1f1; }
.combos select {
  width: 100px; border: 0; border-right: 1px solid #d8d8d8; border-radius: 0; padding: 0 3px; outline: 0;
  appearance: none;
  background: conic-gradient(from -39deg at 50% 100%, #555 78deg, transparent 0) no-repeat right 5px center / 6px 4px;
}

.work { flex: 1; min-height: 0; display: flex; gap: 4px; }
.panel { border: 1px solid #d4d4d4; background: #fff; overflow: hidden; min-height: 0; }
.phead { display: flex; align-items: center; height: 29px; background: #eeeef0; padding-right: 9px; }
.phead .grip { width: 10px; height: 22px; margin: 0 8px 0 5px; }
.close { margin-left: auto; }
.close svg { width: 10px; height: 10px; }
.ptab { height: 28px; padding: 0 10px; align-self: flex-end; }
.ptab.on { background: #fff; color: #1a73e8; }
.thumb { width: 4px; border-radius: 2px; background: #e8e8ea; }

.navpanel { width: 130px; display: flex; flex-direction: column; }
.navpanel .phead { flex: none; }
.navpanel .phead .grip { margin-right: 10px; }
.navbody { display: flex; gap: 4px; min-height: 0; }
.navbody .thumb { height: 272px; margin-top: 47px; }
.navlist { width: 116px; }
.navlist a { display: block; height: 28px; padding: 6px 0 6px 21px; white-space: nowrap; }
.navlist a.on { background: #dcebff; color: #1a73e8; }
.navlist button { width: 100%; height: 41px; margin-bottom: 1px; padding: 0 6px 0 11px; background: #f0f1f6; }
.navlist button.on { background: #d3d3d3; color: #3a74d8; }
.navlist .cat { width: 24px; height: 24px; margin-right: 14px; }
.navlist b { font-weight: 500; color: #111; }
.navlist .on b { color: inherit; }
.navlist .chev { width: 10px; height: 6px; margin-left: auto; }

.side { width: 280px; display: flex; flex-direction: column; gap: 4px; }
.complist { flex: 374 1 0; }
.props { flex: 435 1 0; display: flex; flex-direction: column; }
.ctools { display: flex; gap: 9px; padding: 6px 10px 7px; }
.ctools button { width: 32px; height: 26px; justify-content: center; background: #f4f4f5; border-radius: 3px; }
.ctools .new { margin-right: -8px; }
.ctools .newdrop { width: 12px; }
.ctools .last { width: 26px; margin-left: auto; border: 1px solid #d8d8dc; }
.search { display: flex; align-items: center; height: 26px; margin: 0 8px; padding: 0 10px 0 12px; border-radius: 13px; background: #f4f4f5; }
.search input { flex: 1; min-width: 0; border: 0; background: none; padding: 0; outline: 0; }
.search input::placeholder { color: #777; }
.comp { height: 21px; margin: 11px 0 0 12px; padding: 0 6px 0 3px; background: #c1d9f2; border-radius: 3px; }

.props .phead { flex: none; }
.pbody { display: flex; gap: 4px; min-height: 0; padding-top: 1px; }
.pbody .thumb { height: 284px; margin-top: 12px; }
table { width: 265px; flex: none; align-self: flex-start; border-collapse: collapse; table-layout: fixed; }
.c1 { width: 101px; }
.c2 { width: 124px; }
.c3 { width: 40px; }
th { height: 24px; padding: 0; font-weight: 400; background: #eee; border-right: 1px solid #d4d4d4; border-bottom: 1px solid #d4d4d4; }
tbody tr { height: 25px; }
td { padding: 0; }
td:first-child { padding-left: 15px; }
td:last-child { text-align: center; }
.key label { color: #1d5cf0; }
tbody .sec td { background: #ececec; text-align: left; padding-left: 8px; border-bottom: 1px solid #fff; }
.sec svg { display: inline-block; margin-right: 7px; vertical-align: middle; }
td input[type=text] { display: block; width: 123px; height: 21px; border: 1px solid #d8d8d8; padding: 0 2px; background: #fff; outline: 0; }
.rebar { display: flex; align-items: center; width: 123px; height: 21px; border: 1px solid #d8d8d8; padding-left: 4px; }
.rebar svg { width: 10px; height: 10px; }
td .rebar input[type=text] { border: 0; width: 100px; height: 18px; padding: 0 1px; }
td input[type=checkbox] { display: block; width: 14px; height: 14px; margin: 0 auto; appearance: none; border: 1px solid #7a7a7a; border-radius: 2px; background: #fff; }
td input[type=checkbox]:checked { border-color: #2f7fe0; background: #2f7fe0; }
td input[type=checkbox]:checked::before { content: ""; display: block; width: 8px; height: 4px; margin: 2px; border: solid #fff; border-width: 0 0 2px 2px; rotate: -45deg; }

.view { flex: 1; min-width: 0; position: relative; overflow: hidden; background: #000; }
.drawing { width: 100%; height: 100%; }
.cad { font: 18px "Noto Sans CJK SC", sans-serif; fill: #fff; }
.cad .huge { font-size: 72px; }
.cad .ax { font-size: 16px; fill: #f00; }
.cad .ay { fill: #0f0; }
.handle { position: absolute; left: 0; top: 377px; width: 16px; height: 61px; justify-content: center; background: #444; border-radius: 0 5px 5px 0; }
.handle svg { width: 8px; height: 10px; }
.viewtools { position: absolute; right: 0; top: 0; width: 28px; height: 246px; padding: 12px 0 0 4px; background: #fff; border: 1px solid #d0d0d0; border-width: 1px 0 0 1px; border-radius: 4px 0 0 4px; display: flex; flex-direction: column; gap: 9px; }
.viewtools button { flex-direction: column; gap: 7px; }
.viewtools svg { width: 20px; height: 20px; }
.viewtools .arrow { width: 7px; height: 4px; margin-bottom: -1px; }
.viewtools hr { width: 100%; margin: -2px 0; border: 0; border-top: 1px solid #4a4f5c; }
.t3d { font: 700 8px "Noto Sans", sans-serif; fill: #1f73e0; }

.status { flex: none; position: relative; height: 12px; display: flex; align-items: flex-start; gap: 8px; padding: 8px 16px 0 3px; background: #fcfcfc; overflow: hidden; white-space: nowrap; }
.status::after { content: ""; position: absolute; left: 0; right: 0; bottom: 0; height: 2px; background: rgb(90 90 90 / 75%); }
.status .s1 { margin-left: 22px; }
.sbtns { display: flex; gap: 4px; margin: -5px 0 0 38px; }
.sbtns button { width: 24px; height: 20px; border: 1px solid #3d86e0; border-radius: 3px; background: #d9e7fa; }
.sbtns .wide { width: 35px; }
.sbtns .plain { border-color: #aaa; background: #fff; margin: 0 2px; }
.status .tip { flex: 1; padding-left: 22px; }
.dot { flex: none; width: 13px; height: 13px; border-radius: 50%; margin-top: 1px; }
.orange { background: #f0781e; }
.green { background: #5cb800; }
```
